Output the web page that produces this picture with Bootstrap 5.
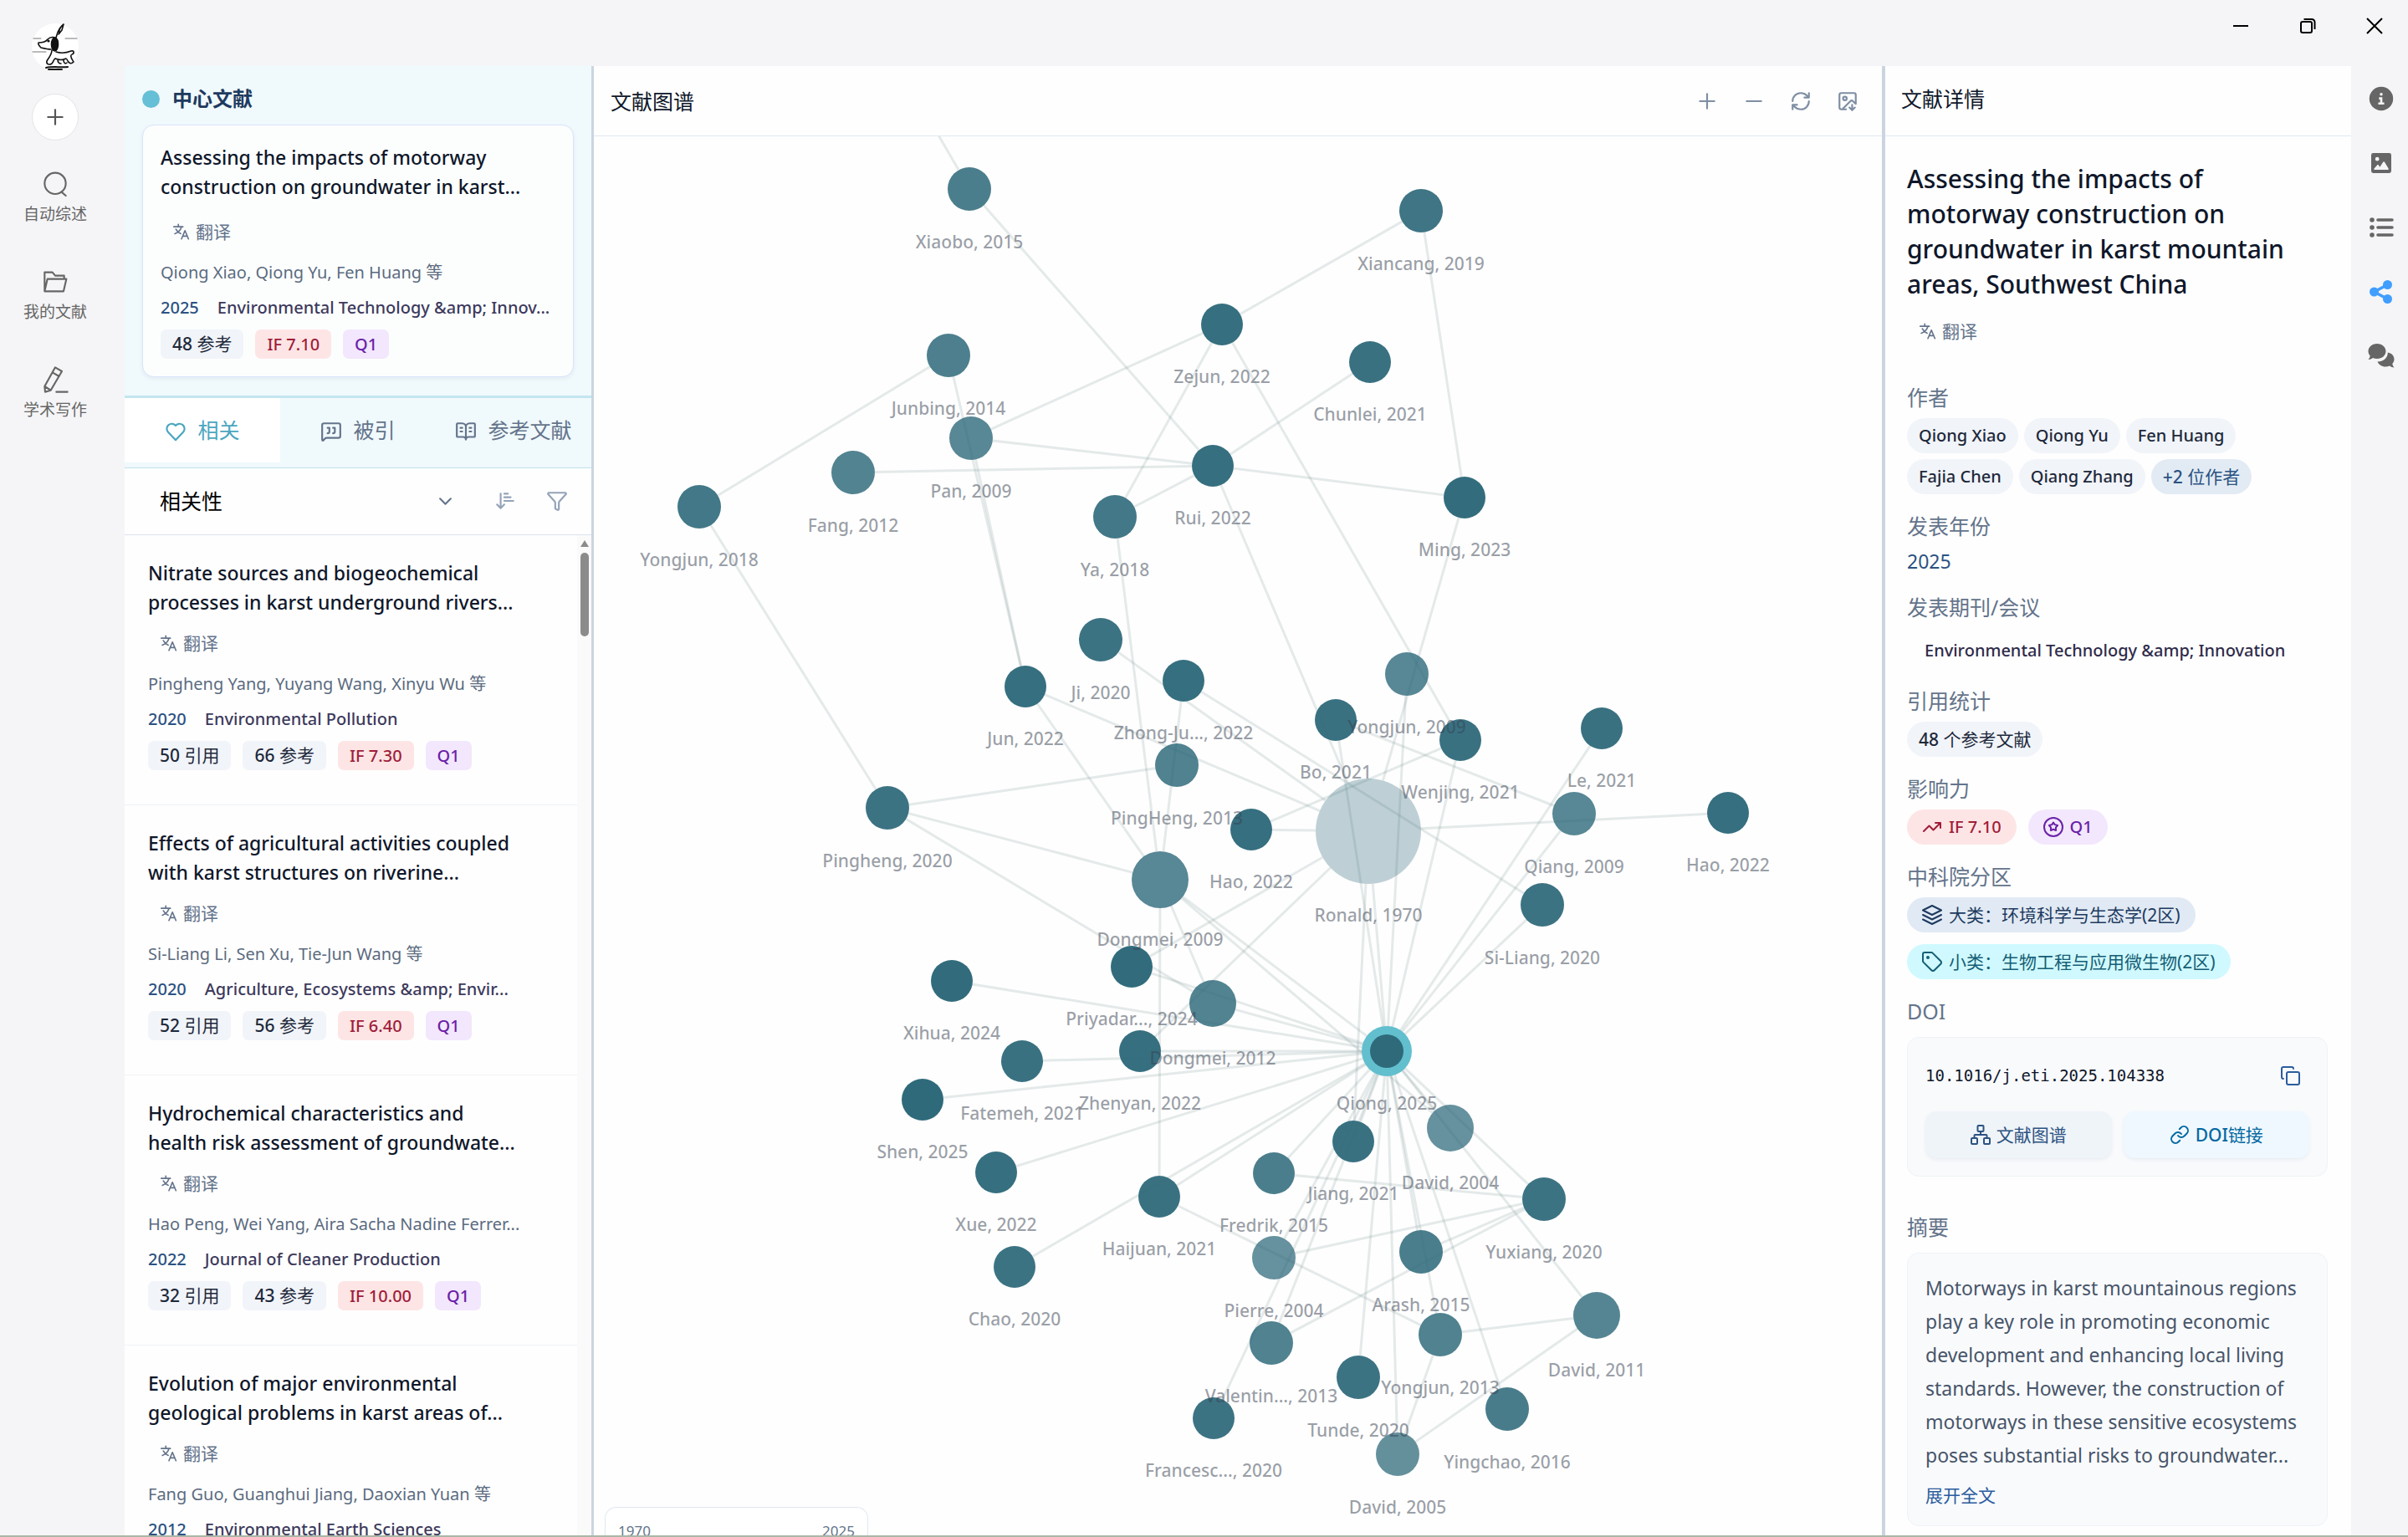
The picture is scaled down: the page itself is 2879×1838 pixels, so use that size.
<!DOCTYPE html>
<html lang="zh-CN">
<head>
<meta charset="utf-8">
<meta name="viewport" content="width=device-width, initial-scale=1">
<title>文献图谱</title>
<link rel="stylesheet" href="https://cdn.jsdelivr.net/npm/bootstrap@5.3.0/dist/css/bootstrap.min.css">
<style>
:root{--ink:#0f172a;--muted:#64748b;--line:#e2e8f0;--split:#cbd5e1;--navy:#2c5282;--teal:#4ba6bf;--tint:#f0f9fc}
body{font-family:"Noto Sans","Noto Sans CJK SC",sans-serif;font-size:20px;line-height:30px;color:var(--ink);background:#f5f5f7;height:100vh;overflow:hidden;border-bottom:2px solid #aab7a7}
button{font:inherit;color:inherit;border:0;background:none;padding:0}
a{color:inherit;text-decoration:none}
.ico{width:26px;height:26px;fill:none;stroke:currentColor;stroke-width:2;stroke-linecap:round;stroke-linejoin:round;flex:none}
.ico-sm{width:20px;height:20px}
.ico-md{width:24px;height:24px}
.side-nav{width:149px;padding:28px 17px 0 0}
.avatar{width:56px;height:56px}
.add-btn{width:56px;height:56px;margin:28px 0 36px;background:#fff;border:1px solid #e4e4e7;color:#555}
.side-link{width:100%;height:117px;font-size:19px;line-height:28px;color:#666;gap:6px}
.side-link .ico{width:32px;height:32px;stroke-width:1.6}
.title-bar{height:79px;padding-right:30px}
.win-btn{width:20px;height:20px;margin:0 0 17px 60px;color:#000}
.win-btn svg{display:block;width:20px;height:20px;fill:none;stroke:currentColor;stroke-width:2}
.list-pane{width:561px;border-right:3px solid var(--split);background:#fefefe}
.center-box{background:var(--tint);border-bottom:3px solid #c3e6f0;padding:24px 21px 22px}
.pane-title{font-size:25px;line-height:30px}
.center-box .pane-title{font-size:24px;color:#1e3a5f;font-weight:700;gap:15px;margin-bottom:16px}
.dot{width:21px;height:21px;background:#65bfd6}
.center-card{background:#fcfefe;border:1px solid #dbe4fb;border-radius:14px;padding:21px 21px 21px;box-shadow:0 2px 5px rgba(30,64,120,.07)}
.paper-title{font-size:23px;line-height:35px;font-weight:500;color:var(--ink)}
.trans{height:42px;margin-top:10px;padding-left:15px;gap:7px;font-size:21px;color:var(--muted)}
.center-card .trans{margin-top:15px}
.authors{margin-top:13px;color:#5b6b80}
.where{margin-top:12px;gap:22px;font-weight:500}
.yr{color:var(--navy)}
.journal{color:#3d3a5c}
.tags{margin-top:11px;gap:14px}
.tg{height:35px;line-height:35px;padding:0 14px;border-radius:7px;background:#f1f4f9;color:#1e293b;font-weight:500;font-size:21px}
.tg.c-if,.pl.c-if{background:#fee5e5;color:#9f1d3a}
.tg.c-q,.pl.c-q{background:#f2e7fd;color:#6b21a8}
.tg.c-if,.tg.c-q{font-size:20px}
.tabs{background:var(--tint);border-bottom:1px solid #bfe3ec;padding-bottom:6px;font-size:25px}
.tab-btn{height:77px;flex:1 1 0;gap:13px;color:var(--muted);padding-bottom:2px;white-space:nowrap}
.tab-btn.on{background:#fff;color:var(--teal)}
.tab-btn .ico{margin-top:5px}
.filters{height:83px;border-bottom:1px solid #dce3ee;padding:0 28px 0 28px;color:#94a3b8}
.sort-sel{width:390px;border:0;padding:0 40px 0 14px;font-size:25px;line-height:40px;color:#000;background-color:transparent;margin-right:auto;
 --bs-form-select-bg-img:url("data:image/svg+xml,%3csvg xmlns='http://www.w3.org/2000/svg' viewBox='0 0 16 16'%3e%3cpath fill='none' stroke='%2364748b' stroke-width='2' stroke-linecap='round' stroke-linejoin='round' d='m2 5 6 6 6-6'/%3e%3c/svg%3e");background-size:17px 17px;background-position:right 14px center}
.filters .ico{margin-left:36px}
.scroll-col{width:17px;background:#fafafa;padding-top:6px;gap:7px}
.scroll-up{border:5px solid transparent;border-bottom:8px solid #8b8b8b;border-top:0}
.scroll-thumb{width:10px;height:100px;border-radius:5px;background:#8b8b8b}
.paper{padding:28px 28px 41px;border-bottom:1px solid #eef2f5}
.map-pane{background:#fefefe;min-width:0}
.bar{height:84px;border-bottom:1px solid var(--line);padding:0 28px 0 20px;flex:none}
.map-tools{gap:30px;color:#7f8ea3}
.map-tools .ico{display:block}
.legend-box{left:13px;bottom:0;width:315px;height:34px;overflow:hidden;background:#fff;border:1px solid var(--line);border-bottom:0;border-radius:14px 14px 0 0;padding:15px 15px 0;font-size:17px;line-height:26px;color:var(--muted)}
#graph text{font-size:21px;font-weight:500;fill:#374151;fill-opacity:.5;text-anchor:middle}
#graph line{stroke:#6f8888;stroke-opacity:.18;stroke-width:3}
#graph circle{fill:#2b6778}
.info-pane{width:561px;border-left:4px solid var(--split);background:#fefefe}
.info-pane .bar{padding:0 19px 6px}
.info-body{padding:30px 28px 0 26px}
.info-title{font-size:30px;line-height:42px;font-weight:500;margin:0}
.info-body>.trans{margin-top:14px;margin-bottom:43px}
.sec{font-size:25px;line-height:30px;color:var(--muted);margin:0 0 10px;font-weight:400}
.blk{margin-bottom:23px}
.year-line{font-size:23px;padding-top:2px;margin-bottom:25px}
.journal-line{padding:12px 21px 0;margin-bottom:30px;font-weight:500;color:#2f2b4a}
.doi-h{margin-bottom:16px}
.pills{gap:7px}
.pills-wide{gap:14px}
.pl{height:42px;line-height:42px;border-radius:21px;padding:0 14px;background:#f1f4f9;color:#1e293b;font-weight:500}
.pl-cn{font-size:21px}
.pl-ico{padding:0 18px;gap:8px}
.pl.pl-more{background:#e2ebf4;color:var(--navy)}
.pl.pl-major{background:#e1eaf4;color:#1e3a5f;font-weight:400}
.pl.pl-minor{background:#cff9fe;color:#155e75;font-weight:400}
.doi-card{background:#f9fafc;border:1px solid #eef3f8;border-radius:14px;padding:21px}
.doi-gap{margin-bottom:45px}
.doi-row{height:48px;margin-bottom:19px}
.doi-num{font-family:"DejaVu Sans Mono",monospace;font-size:19px;color:#0f172a}
.copy-btn{color:#2b5c9e;padding-right:11px}
.act-btn{height:56px;flex:1 1 0;border-radius:14px;gap:7px;font-size:21px;box-shadow:0 2px 4px rgba(30,64,120,.07)}
.act-map{background:#eff4f8;color:var(--navy)}
.act-doi{background:#f0f8ff;color:#0369a1}
.abstract{font-size:23px;line-height:40px;color:#475569;margin:0 0 13px}
.more-link{color:#2b5c9e;display:block;font-size:21px}
.tool-nav{width:68px;padding:0 0 0 4px;color:#666}
.tool-nav button{height:77px;width:100%}
.tool-nav .on{color:#409eff}
.tool-nav svg{width:32px;height:32px;fill:currentColor}
.shrinkable{min-width:0;min-height:0}
</style>
<script src="https://cdn.jsdelivr.net/npm/bootstrap@5.3.0/dist/js/bootstrap.bundle.min.js"></script>
</head>
<body class="d-flex">

<svg width="0" height="0" class="d-none" aria-hidden="true">
  <symbol id="i-tr" viewBox="0 0 24 24"><path d="M1 5h13M7.500 1.500V5M12 5.500C10.500 10 6.500 13.500 2.500 15M4 8.500c1.500 3 4 5 7 6.500M12 22.500l5-12 5 12M14 18.500h6"/></symbol>
  <symbol id="i-plus" viewBox="0 0 24 24"><path d="M12 4v16M4 12h16"/></symbol>
  <symbol id="i-funnel" viewBox="0 0 24 24"><path d="M10 20a1 1 0 0 0 .553.895l2 1A1 1 0 0 0 14 21v-7a2 2 0 0 1 .517-1.341L21.740 4.670A1 1 0 0 0 21 3H3a1 1 0 0 0-.742 1.670l7.225 7.989A2 2 0 0 1 10 14z"/></symbol>
</svg>

<nav class="side-nav d-flex flex-column align-items-center flex-shrink-0">
  <svg class="avatar" viewBox="0 0 56 56" fill="none" stroke="#111" stroke-width="1.600" stroke-linecap="round" stroke-linejoin="round">
    <circle cx="28" cy="28" r="28" fill="#fff" stroke="none"/>
    <path d="M2 18h9M40 18h14M1 34h16" stroke="#777" stroke-width="1"/>
    <path d="M29 17c1-5 3-9 5-12M38 1c-4 3-6 8-5 11M38 1l-2 7-4 5"/>
    <path d="M8 23c5 0 9-1 11-4 4-4 10-3 12 2M8 23c-1 2 1 4 3 6 4 1 8 2 12 2"/>
    <circle cx="20" cy="21" r=".8" fill="#111"/>
    <ellipse cx="27.500" cy="25" rx="4" ry="8" fill="#111"/>
    <path d="M24 32c0 5-3 8-6 13-1 4 3 5 6 3M29 34c6 2 13 1 18-1 4-1 4 3 1 4M47 38c-1 3 2 6 3 8-3 3-6 2-8-3M24 48c2-2 2-5 4-6 5 2 9 2 13 0M31 43c0 3 1 5 4 5M38 44c0 3 2 5 4 3"/>
    <path d="M17 53c8-2 18 0 26-1M20 55h16" stroke-width="2"/>
  </svg>
  <button class="add-btn rounded-circle d-flex align-items-center justify-content-center" aria-label="新建"><svg class="ico"><use href="#i-plus"/></svg></button>
  <a href="#" class="side-link d-flex flex-column align-items-center"><svg class="ico" viewBox="0 0 24 24"><circle cx="12" cy="11.500" r="9.500"/><path d="M17.500 19l4 3.500"/></svg>自动综述</a>
  <a href="#" class="side-link d-flex flex-column align-items-center"><svg class="ico" viewBox="0 0 24 24"><path d="M2.500 20.500v-17h7l2.500 3h8v3M2.500 20.500l2.500-11h17l-2.500 11z"/></svg>我的文献</a>
  <a href="#" class="side-link d-flex flex-column align-items-center"><svg class="ico" viewBox="0 0 24 24"><path d="M12 1l6 3.500-10 17-5 1.500-.500-5zM9.500 5.500l6 3.500M2.500 18l5.500 3.500M13 23h10"/></svg>学术写作</a>
</nav>

<div class="shrinkable d-flex flex-column flex-grow-1">
  <header class="title-bar d-flex justify-content-end align-items-center flex-shrink-0">
    <button class="win-btn" aria-label="最小化"><svg viewBox="0 0 20 20"><path d="M1 10h18"/></svg></button>
    <button class="win-btn" aria-label="还原"><svg viewBox="0 0 20 20"><rect x="2" y="5" width="13" height="13" rx="2"/><path d="M5.500 2h9.500a3.500 3.500 0 0 1 3.500 3.500V14"/></svg></button>
    <button class="win-btn" aria-label="关闭"><svg viewBox="0 0 20 20"><path d="M1 1l18 18M19 1L1 19"/></svg></button>
  </header>

  <div class="shrinkable d-flex flex-grow-1">
    <aside class="list-pane d-flex flex-column flex-shrink-0">
      <section class="center-box">
        <h2 class="pane-title d-flex align-items-center"><span class="dot rounded-circle"></span>中心文献</h2>
        <article class="center-card">
          <div class="paper-title">Assessing the impacts of motorway<br>construction on groundwater in karst...</div>
          <button class="trans d-flex align-items-center"><svg class="ico ico-sm"><use href="#i-tr"/></svg>翻译</button>
          <div class="authors text-nowrap">Qiong Xiao, Qiong Yu, Fen Huang 等</div>
          <div class="where d-flex text-nowrap"><span class="yr">2025</span><span class="journal">Environmental Technology &amp;amp; Innov...</span></div>
          <div class="tags d-flex"><span class="tg">48 <span class="fw-normal">参考</span></span><span class="tg c-if">IF 7.10</span><span class="tg c-q">Q1</span></div>
        </article>
      </section>

      <div class="tabs d-flex" role="tablist">
        <button class="tab-btn on d-flex align-items-center justify-content-center" role="tab"><svg class="ico" viewBox="0 0 24 24"><path d="M20.500 12.500L12 21.500l-8.500-9a5.500 5.500 0 1 1 8.500-7 5.500 5.500 0 1 1 8.500 7"/></svg>相关</button>
        <button class="tab-btn d-flex align-items-center justify-content-center" role="tab"><svg class="ico" viewBox="0 0 24 24"><path d="M22 17a2 2 0 0 1-2 2H6.800a2 2 0 0 0-1.400.600l-2.200 2.200A.7.7 0 0 1 2 21.300V5a2 2 0 0 1 2-2h16a2 2 0 0 1 2 2zM8 14a2 2 0 0 0 2-2V8H8M14 14a2 2 0 0 0 2-2V8h-2"/></svg>被引</button>
        <button class="tab-btn d-flex align-items-center justify-content-center" role="tab"><svg class="ico" viewBox="0 0 24 24"><path d="M12 7v14M16 12h2M16 8h2M6 12h2M6 8h2M3 18a1 1 0 0 1-1-1V4a1 1 0 0 1 1-1h5a4 4 0 0 1 4 4 4 4 0 0 1 4-4h5a1 1 0 0 1 1 1v13a1 1 0 0 1-1 1h-6a3 3 0 0 0-3 3 3 3 0 0 0-3-3z"/></svg>参考文献</button>
      </div>

      <div class="filters d-flex align-items-center">
        <select class="form-select sort-sel" aria-label="排序方式"><option>相关性</option></select>
        <button aria-label="排序"><svg class="ico d-block" viewBox="0 0 24 24"><path d="m3 16 4 4 4-4M7 20V4M11 4h4M11 8h7M11 12h10"/></svg></button>
        <button aria-label="筛选"><svg class="ico d-block"><use href="#i-funnel"/></svg></button>
      </div>

      <div class="d-flex flex-grow-1 overflow-hidden">
        <div class="flex-grow-1">
          <article class="paper">
            <div class="paper-title text-nowrap">Nitrate sources and biogeochemical<br>processes in karst underground rivers...</div>
            <button class="trans d-flex align-items-center"><svg class="ico ico-sm"><use href="#i-tr"/></svg>翻译</button>
            <div class="authors text-nowrap">Pingheng Yang, Yuyang Wang, Xinyu Wu 等</div>
            <div class="where d-flex text-nowrap"><span class="yr">2020</span><span class="journal">Environmental Pollution</span></div>
            <div class="tags d-flex"><span class="tg">50 <span class="fw-normal">引用</span></span><span class="tg">66 <span class="fw-normal">参考</span></span><span class="tg c-if">IF 7.30</span><span class="tg c-q">Q1</span></div>
          </article>
          <article class="paper">
            <div class="paper-title text-nowrap">Effects of agricultural activities coupled<br>with karst structures on riverine...</div>
            <button class="trans d-flex align-items-center"><svg class="ico ico-sm"><use href="#i-tr"/></svg>翻译</button>
            <div class="authors text-nowrap">Si-Liang Li, Sen Xu, Tie-Jun Wang 等</div>
            <div class="where d-flex text-nowrap"><span class="yr">2020</span><span class="journal">Agriculture, Ecosystems &amp;amp; Envir...</span></div>
            <div class="tags d-flex"><span class="tg">52 <span class="fw-normal">引用</span></span><span class="tg">56 <span class="fw-normal">参考</span></span><span class="tg c-if">IF 6.40</span><span class="tg c-q">Q1</span></div>
          </article>
          <article class="paper">
            <div class="paper-title text-nowrap">Hydrochemical characteristics and<br>health risk assessment of groundwate...</div>
            <button class="trans d-flex align-items-center"><svg class="ico ico-sm"><use href="#i-tr"/></svg>翻译</button>
            <div class="authors text-nowrap">Hao Peng, Wei Yang, Aira Sacha Nadine Ferrer...</div>
            <div class="where d-flex text-nowrap"><span class="yr">2022</span><span class="journal">Journal of Cleaner Production</span></div>
            <div class="tags d-flex"><span class="tg">32 <span class="fw-normal">引用</span></span><span class="tg">43 <span class="fw-normal">参考</span></span><span class="tg c-if">IF 10.00</span><span class="tg c-q">Q1</span></div>
          </article>
          <article class="paper">
            <div class="paper-title text-nowrap">Evolution of major environmental<br>geological problems in karst areas of...</div>
            <button class="trans d-flex align-items-center"><svg class="ico ico-sm"><use href="#i-tr"/></svg>翻译</button>
            <div class="authors text-nowrap">Fang Guo, Guanghui Jiang, Daoxian Yuan 等</div>
            <div class="where d-flex text-nowrap"><span class="yr">2012</span><span class="journal">Environmental Earth Sciences</span></div>
          </article>
        </div>
        <div class="scroll-col d-flex flex-column align-items-center flex-shrink-0"><span class="scroll-up"></span><span class="scroll-thumb"></span></div>
      </div>
    </aside>

    <main class="map-pane d-flex flex-column flex-grow-1">
      <div class="bar d-flex align-items-center justify-content-between">
        <span class="pane-title">文献图谱</span>
        <div class="map-tools d-flex">
          <button aria-label="放大"><svg class="ico"><use href="#i-plus"/></svg></button>
          <button aria-label="缩小"><svg class="ico" viewBox="0 0 24 24"><path d="M4 12h16"/></svg></button>
          <button aria-label="刷新"><svg class="ico" viewBox="0 0 24 24"><path d="M3 12a9 9 0 0 1 9-9 9.750 9.750 0 0 1 6.740 2.740L21 8M21 3v5h-5M21 12a9 9 0 0 1-9 9 9.750 9.750 0 0 1-6.740-2.740L3 16M8 16H3v5"/></svg></button>
          <button aria-label="导出图片"><svg class="ico" viewBox="0 0 24 24"><path d="M10.300 21H5a2 2 0 0 1-2-2V5a2 2 0 0 1 2-2h14a2 2 0 0 1 2 2v10l-3.100-3.100a2 2 0 0 0-2.814.014L6 21M14 19l3 3 3-3M17 22v-6"/><circle cx="9" cy="9" r="2"/></svg></button>
        </div>
      </div>
      <div class="position-relative flex-grow-1 overflow-hidden">
        <svg id="graph" class="d-block w-100 h-100" viewBox="710 163 1540 1673" preserveAspectRatio="xMidYMin slice" role="img" aria-label="文献关系图"></svg>
        <div class="legend-box position-absolute d-flex justify-content-between"><span>1970</span><span>2025</span></div>
      </div>
    </main>

    <aside class="info-pane d-flex flex-column flex-shrink-0">
      <div class="bar d-flex align-items-center"><span class="pane-title">文献详情</span></div>
      <div class="info-body flex-grow-1 overflow-hidden">
        <h1 class="info-title">Assessing the impacts of<br>motorway construction on<br>groundwater in karst mountain<br>areas, Southwest China</h1>
        <button class="trans d-flex align-items-center"><svg class="ico ico-sm"><use href="#i-tr"/></svg>翻译</button>

        <h3 class="sec">作者</h3>
        <div class="pills blk d-flex flex-wrap"><span class="pl">Qiong Xiao</span><span class="pl">Qiong Yu</span><span class="pl">Fen Huang</span><span class="pl">Fajia Chen</span><span class="pl">Qiang Zhang</span><button class="pl pl-cn pl-more">+2 <span class="fw-normal">位作者</span></button></div>

        <h3 class="sec">发表年份</h3>
        <div class="yr year-line">2025</div>

        <h3 class="sec">发表期刊/会议</h3>
        <div class="journal-line">Environmental Technology &amp;amp; Innovation</div>

        <h3 class="sec">引用统计</h3>
        <div class="pills blk d-flex"><span class="pl pl-cn">48 <span class="fw-normal">个参考文献</span></span></div>

        <h3 class="sec">影响力</h3>
        <div class="pills-wide blk d-flex">
          <span class="pl pl-ico c-if d-flex align-items-center"><svg class="ico ico-md" viewBox="0 0 24 24"><path d="M16 7h6v6M22 7l-8.500 8.500-5-5L2 17"/></svg>IF 7.10</span>
          <span class="pl pl-ico c-q d-flex align-items-center"><svg class="ico ico-md" viewBox="0 0 24 24"><circle cx="12" cy="12" r="11"/><path d="M12 6.500l1.700 2.600 3.400.900-2.200 2.600.200 3.400-3.100-1.200-3.100 1.200.200-3.400-2.200-2.600 3.400-.900z"/></svg>Q1</span>
        </div>

        <h3 class="sec">中科院分区</h3>
        <div class="pills-wide blk d-flex flex-column align-items-start">
          <span class="pl pl-cn pl-ico pl-major d-flex align-items-center"><svg class="ico ico-md" viewBox="0 0 24 24"><path d="M12 1L23 6.500 12 12 1 6.500zM1 12l11 5.500L23 12M1 17.500L12 23l11-5.500"/></svg>大类：环境科学与生态学(2区)</span>
          <span class="pl pl-cn pl-ico pl-minor d-flex align-items-center"><svg class="ico ico-md" viewBox="0 0 24 24"><path d="M12.600 1.600A2 2 0 0 0 11.200 1H3a2 2 0 0 0-2 2v8.200a2 2 0 0 0 .600 1.400l9.700 9.700a2.400 2.400 0 0 0 3.400 0l7.600-7.600a2.400 2.400 0 0 0 0-3.400z"/><circle cx="7" cy="7" r="1" fill="currentColor"/></svg>小类：生物工程与应用微生物(2区)</span>
        </div>

        <h3 class="sec doi-h">DOI</h3>
        <div class="doi-card doi-gap">
          <div class="d-flex align-items-center justify-content-between doi-row"><span class="doi-num">10.1016/j.eti.2025.104338</span><button aria-label="复制" class="copy-btn"><svg class="ico ico-md d-block" viewBox="0 0 24 24"><rect x="8" y="8" width="15" height="15" rx="2"/><path d="M4 16a2 2 0 0 1-2-2V4a2 2 0 0 1 2-2h10a2 2 0 0 1 2 2"/></svg></button></div>
          <div class="pills-wide d-flex">
            <button class="act-btn act-map d-flex align-items-center justify-content-center"><svg class="ico ico-md" viewBox="0 0 24 24"><rect x="16" y="16" width="7" height="7" rx="1"/><rect x="1" y="16" width="7" height="7" rx="1"/><rect x="8.500" y="1" width="7" height="7" rx="1"/><path d="M4.500 16v-3a1 1 0 0 1 1-1h13a1 1 0 0 1 1 1v3M12 12V8"/></svg>文献图谱</button>
            <a href="#" class="act-btn act-doi d-flex align-items-center justify-content-center"><svg class="ico ico-md" viewBox="0 0 24 24"><path d="M10 13a5 5 0 0 0 7.540.540l3-3a5 5 0 0 0-7.070-7.070l-1.720 1.710M14 11a5 5 0 0 0-7.540-.540l-3 3a5 5 0 0 0 7.070 7.070l1.710-1.710"/></svg><span><span class="fw-medium">DOI</span>链接</span></a>
          </div>
        </div>

        <h3 class="sec doi-h">摘要</h3>
        <div class="doi-card">
          <p class="abstract">Motorways in karst mountainous regions<br>play a key role in promoting economic<br>development and enhancing local living<br>standards. However, the construction of<br>motorways in these sensitive ecosystems<br>poses substantial risks to groundwater...</p>
          <a href="#" class="more-link">展开全文</a>
        </div>
      </div>
    </aside>

    <nav class="tool-nav d-flex flex-column align-items-center flex-shrink-0">
      <button aria-label="信息"><svg viewBox="-2 -2 36 36"><path fill-rule="evenodd" d="M16 0a16 16 0 1 0 0 32 16 16 0 0 0 0-32zM13 14h4.500v7H20v3h-8v-3h2.500v-4H13zM16 8a2 2 0 1 1 0 4 2 2 0 0 1 0-4z"/></svg></button>
      <button aria-label="图片"><svg viewBox="-4 -4 40 40"><path fill-rule="evenodd" d="M4 1h24a3 3 0 0 1 3 3v24a3 3 0 0 1-3 3H4a3 3 0 0 1-3-3V4a3 3 0 0 1 3-3zM10 7a3 3 0 1 0 0 6 3 3 0 0 0 0-6zM6 26h20c1 0 1.300-1 .800-1.800L21 14.500c-.600-.900-1.600-.900-2.200 0L14 22l-2-2.800c-.600-.800-1.500-.800-2.100 0L5.300 24.500c-.500.700-.300 1.500.700 1.500z"/></svg></button>
      <button aria-label="列表"><svg viewBox="0 0 32 32"><circle cx="5" cy="7" r="2.800"/><circle cx="5" cy="16" r="2.800"/><circle cx="5" cy="25" r="2.800"/><path d="M12 7h17M12 16h17M12 25h17" stroke="currentColor" stroke-width="3.600" stroke-linecap="round"/></svg></button>
      <button aria-label="图谱" class="on"><svg viewBox="0 0 32 32"><circle cx="7.500" cy="16" r="5.500"/><circle cx="23.500" cy="7.500" r="5.500"/><circle cx="23.500" cy="24.500" r="5.500"/><path d="M23.500 7.500L7.500 16l16 8.500" fill="none" stroke="currentColor" stroke-width="3.500"/></svg></button>
      <button aria-label="对话"><svg viewBox="0 0 32 32"><path d="M11 1c6 0 10.500 4 10.500 9S17 19 11 19c-1.800 0-3.500-.400-5-1-1.500 1.200-3.500 2-5.500 2 1-1 2-2.800 2.200-4.500C1.300 13.900.5 12 .5 10 .5 5 5 1 11 1zM23.800 11.500c4.600.800 7.700 4 7.700 8 0 2-.800 3.900-2.200 5.500.2 1.700 1.200 3.500 2.200 4.500-2 0-4-.800-5.500-2-1.500.600-3.200 1-5 1-4.300 0-8-2.400-9.500-6 7 0 12.500-4.500 12.300-11z"/></svg></button>
    </nav>
  </div>
</div>
<script>
// id: [name, year, x, y, radius]
const papers = {
  xiaobo:['Xiaobo',2015,1159,226,26], xiancang:['Xiancang',2019,1699,252,26], zejun:['Zejun',2022,1461,388,25],
  chunlei:['Chunlei',2021,1638,433,25], junbing:['Junbing',2014,1134,425,26], pan:['Pan',2009,1161,524,26],
  fang:['Fang',2012,1020,565,26], yongjun18:['Yongjun',2018,836,606,26], ya:['Ya',2018,1333,618,26],
  rui:['Rui',2022,1450,557,25], ming:['Ming',2023,1751,595,25], ji:['Ji',2020,1316,765,26],
  jun:['Jun',2022,1226,821,25], zhongju:['Zhong-Ju...',2022,1415,814,25], yongjun09:['Yongjun',2009,1682,806,26],
  bo:['Bo',2021,1597,861,25], wenjing:['Wenjing',2021,1746,885,25], le:['Le',2021,1915,871,25],
  pingheng13:['PingHeng',2013,1407,915,26], pingheng20:['Pingheng',2020,1061,966,26], haoA:['Hao',2022,1496,992,25],
  ronald:['Ronald',1970,1636,994,63], qiang:['Qiang',2009,1882,973,26], haoB:['Hao',2022,2066,972,25],
  siliang:['Si-Liang',2020,1844,1082,26], dongmei09:['Dongmei',2009,1387,1052,34], priyadar:['Priyadar...',2024,1353,1156,25],
  dongmei12:['Dongmei',2012,1450,1200,28], xihua:['Xihua',2024,1138,1173,25], zhenyan:['Zhenyan',2022,1363,1257,25],
  fatemeh:['Fatemeh',2021,1222,1269,25], shen:['Shen',2025,1103,1315,25], xue:['Xue',2022,1191,1402,25],
  chao:['Chao',2020,1213,1515,25], haijuan:['Haijuan',2021,1386,1431,25], qiong:['Qiong',2025,1658,1257,25],
  jiang:['Jiang',2021,1618,1365,25], david04:['David',2004,1734,1349,28], fredrik:['Fredrik',2015,1523,1403,25],
  yuxiang:['Yuxiang',2020,1846,1434,26], pierre:['Pierre',2004,1523,1504,26], arash:['Arash',2015,1699,1497,26],
  david11:['David',2011,1909,1573,28], valentin:['Valentin...',2013,1520,1606,26], yongjun13:['Yongjun',2013,1722,1596,26],
  tunde:['Tunde',2020,1624,1647,26], yingchao:['Yingchao',2016,1802,1685,26], francesc:['Francesc...',2020,1451,1696,25],
  david05:['David',2005,1671,1739,26]
};
const links = `xiaobo-rui junbing-yongjun18 junbing-jun pan-jun pan-zejun pan-rui fang-rui zejun-xiancang zejun-ya zejun-wenjing
xiancang-ming rui-chunlei rui-ya rui-ming rui-ronald bo-qiong bo-qiang ming-ronald yongjun09-qiong wenjing-haoA wenjing-qiong
ya-dongmei09 ji-ronald zhongju-siliang zhongju-dongmei09 jun-dongmei09 jun-ronald pingheng20-pingheng13 pingheng20-dongmei09
pingheng20-dongmei12 yongjun18-pingheng20 haoA-ronald ronald-haoB ronald-priyadar ronald-zhenyan ronald-qiong ronald-jiang
dongmei09-dongmei12 dongmei09-qiong dongmei09-david04 dongmei09-haijuan priyadar-qiong dongmei12-qiong xihua-qiong fatemeh-qiong
zhenyan-qiong shen-qiong xue-qiong chao-qiong haijuan-qiong haijuan-yongjun13 qiong-fredrik qiong-jiang qiong-pierre qiong-valentin
qiong-francesc qiong-tunde qiong-david05 qiong-arash qiong-yongjun13 qiong-yingchao qiong-le qiong-qiang qiong-siliang
qiong-david04 qiong-david11 qiong-yuxiang fredrik-yuxiang pierre-yuxiang valentin-yuxiang arash-yuxiang yongjun13-david11
yongjun13-david05 david11-david05`.split(/\s+/);
const fade = {2025:.98,2024:.97,2023:.96,2022:.95,2021:.935,2020:.92,2019:.905,2018:.89,2016:.86,2015:.85,2014:.84,2013:.825,2012:.815,2011:.8,2009:.79,2005:.735,2004:.72,1970:.3};

// stop each link at the rim of its nodes, so that only crossing links show through a node
function trim(a, b) {
  const dx = b[2]-a[2], dy = b[3]-a[3], d = Math.hypot(dx, dy);
  const at = (p, r) => [p[2] + dx/d*r, p[3] + dy/d*r];
  const [x1,y1] = at(a, a[4]), [x2,y2] = at(b, -b[4]);
  return `<line x1="${x1}" y1="${y1}" x2="${x2}" y2="${y2}"/>`;
}
let out = '<line x1="1085" y1="98" x2="1146" y2="203"/>';
for (const l of links) { const [a,b] = l.split('-'); out += trim(papers[a], papers[b]); }
for (const [id,[,y,cx,cy,r]] of Object.entries(papers)) {
  out += id === 'qiong'
    ? `<circle cx="${cx}" cy="${cy}" r="30" style="fill:#62bfce"/><circle cx="${cx}" cy="${cy}" r="20" style="fill:#2f6a7a"/>`
    : `<circle cx="${cx}" cy="${cy}" r="${r}" opacity="${fade[y]}"/>`;
}
for (const [n,y,cx,cy,r] of Object.values(papers)) out += `<text x="${cx}" y="${cy+r+45}">${n}, ${y}</text>`;
document.getElementById('graph').innerHTML = out;
</script>
</body>
</html>
